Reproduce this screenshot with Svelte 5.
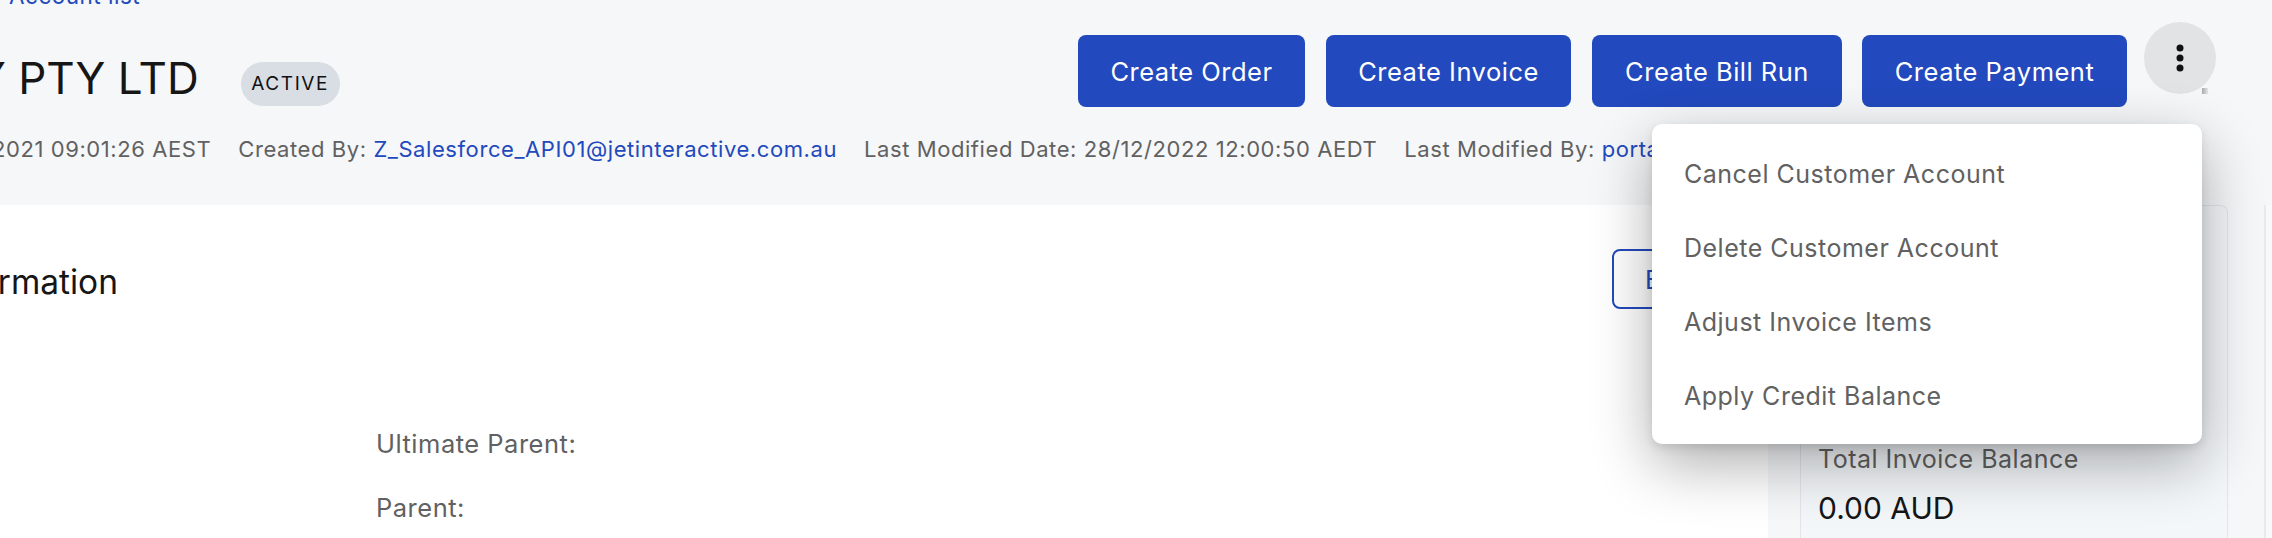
<script>
    const actions = ['Create Order', 'Create Invoice', 'Create Bill Run', 'Create Payment'];
    const menu = ['Cancel Customer Account', 'Delete Customer Account', 'Adjust Invoice Items', 'Apply Credit Balance'];
</script>

<div class="page">
    <header>
        <a class="crumb" href="#top">Account list</a>
        <div class="title-row">
            <h1>Y PTY LTD</h1>
            <span class="badge">ACTIVE</span>
            <div class="actions">
                {#each actions as action}
                    <button class="primary">{action}</button>
                {/each}
                <button class="kebab" aria-label="More actions">
                    <svg width="8" height="28" viewBox="0 0 8 28"><circle cx="4" cy="4" r="3.5" /><circle cx="4" cy="14" r="3.5" /><circle cx="4" cy="24" r="3.5" /></svg>
                    <span class="notch"></span>
                </button>
            </div>
        </div>
        <div class="meta">
            <span class="first">2021 09:01:26 AEST</span>
            <span>Created By: <a href="#top">Z_Salesforce_API01@jetinteractive.com.au</a></span>
            <span>Last Modified Date: 28/12/2022 12:00:50 AEDT</span>
            <span>Last Modified By: <a href="#top">portal</a></span>
        </div>
    </header>

    <div class="body">
        <section class="main">
            <div class="main-head">
                <h2>Information</h2>
                <button class="outline">Edit</button>
            </div>
            <dl>
                <dt>Ultimate Parent:</dt>
                <dt>Parent:</dt>
            </dl>
        </section>
        <aside>
            <div class="balance">
                <div class="label">Total Invoice Balance</div>
                <div class="value">0.00 AUD</div>
            </div>
        </aside>
        <div class="rail"></div>
    </div>

    <div class="menu">
        {#each menu as item}
            <div class="item">{item}</div>
        {/each}
    </div>
</div>

<style>
    :global(body) {
        margin: 0;
        background: #f6f7f9;
    }

    .page {
        position: relative;
        isolation: isolate;
        width: 2272px;
        height: 538px;
        overflow: hidden;
        background: #f6f7f9;
        font-family: Inter, "Liberation Sans", sans-serif;
        color: #616161;
    }

    a {
        color: #2249bd;
        text-decoration: none;
    }

    header {
        display: flow-root;
        height: 205px;
        box-sizing: border-box;
    }

    .crumb {
        display: block;
        height: 33px;
        margin-top: -19px;
        margin-left: 9px;
        font-size: 22.5px;
        line-height: 29px;
        letter-spacing: 0.5px;
    }

    .title-row {
        display: flex;
        align-items: flex-start;
        padding-top: 8px;
        margin-left: -24px;
    }

    h1 {
        margin: 31px 0 0;
        font-size: 44px;
        line-height: 50px;
        font-weight: 400;
        color: #161616;
        white-space: nowrap;
    }

    .badge {
        margin: 40px 0 0 42px;
        width: 99px;
        height: 44px;
        border-radius: 22px;
        background: #d9dee4;
        color: #111;
        font-size: 19px;
        letter-spacing: 1.6px;
        line-height: 44px;
        text-align: center;
    }

    .actions {
        margin-left: auto;
        margin-right: 56px;
        display: flex;
        align-items: flex-start;
    }

    button {
        font-family: inherit;
        cursor: pointer;
    }

    .primary {
        height: 72px;
        margin-top: 13px;
        margin-right: 21px;
        padding: 0;
        border: none;
        border-radius: 8px;
        background: #2249bd;
        color: #fff;
        font-size: 25.5px;
        letter-spacing: 0.5px;
    }

    .primary:nth-child(1) { width: 227px; }
    .primary:nth-child(2) { width: 245px; }
    .primary:nth-child(3) { width: 250px; margin-right: 20px; }
    .primary:nth-child(4) { width: 265px; margin-right: 17px; }

    .kebab {
        position: relative;
        width: 72px;
        height: 72px;
        padding: 0;
        border: none;
        border-radius: 50%;
        background: #e2e3e4;
        display: flex;
        align-items: center;
        justify-content: center;
    }

    .kebab svg {
        fill: #111;
    }

    /* little grey corner that pokes out under the round button */
    .notch {
        position: absolute;
        left: 58px;
        top: 66px;
        width: 6px;
        height: 6px;
        background: linear-gradient(90deg, #a9aaac, #e4e5e7);
        z-index: -1;
    }

    .meta {
        display: flex;
        gap: 27px;
        margin-top: 28px;
        font-size: 22px;
        letter-spacing: 0.58px;
        line-height: 28px;
        white-space: nowrap;
    }

    .first {
        margin-left: -8px;
    }

    .body {
        display: flex;
        height: 333px;
    }

    .main {
        width: 1768px;
        background: #fff;
    }

    .main-head {
        position: relative;
        height: 100px;
    }

    h2 {
        margin: 0;
        position: absolute;
        right: 1650px;
        top: 57px;
        font-size: 33.5px;
        line-height: 40px;
        font-weight: 400;
        color: #161616;
        white-space: nowrap;
    }

    .outline {
        position: absolute;
        left: 1612px;
        top: 44px;
        width: 120px;
        height: 60px;
        padding: 0 0 0 31px;
        border: 2px solid #2249bd;
        border-radius: 8px;
        background: #fff;
        color: #2249bd;
        font-size: 25.5px;
        text-align: left;
    }

    dl {
        margin: 0;
        padding: 124px 0 0 376px;
    }

    dt {
        font-size: 25.5px;
        line-height: 30px;
        letter-spacing: 0.5px;
        margin-bottom: 34px;
    }

    aside {
        flex: 1;
        padding: 0 36px 0 32px;
    }

    .balance {
        height: 100%;
        box-sizing: border-box;
        padding: 238px 17px 0;
        background: #f4f7fa;
        border: 1px solid #e3e5e8;
        border-bottom: none;
        border-radius: 8px 8px 0 0;
    }

    .label {
        font-size: 25px;
        line-height: 30px;
        letter-spacing: 0.5px;
    }

    .value {
        margin-top: 15px;
        font-size: 30px;
        line-height: 38px;
        color: #161616;
    }

    .rail {
        width: 8px;
        background: #f8f9fa;
        border-left: 2px solid #e9eaec;
        box-sizing: border-box;
    }

    .menu {
        position: absolute;
        left: 1652px;
        top: 124px;
        width: 550px;
        height: 320px;
        box-sizing: border-box;
        padding: 13px 0 0;
        background: #fff;
        border-radius: 10px;
        box-shadow: 0 20px 60px rgba(0, 0, 0, 0.32), 0 4px 10px rgba(0, 0, 0, 0.1);
    }

    .item {
        height: 74px;
        padding-left: 32px;
        font-size: 25px;
        line-height: 74px;
        letter-spacing: 0.5px;
    }
</style>
